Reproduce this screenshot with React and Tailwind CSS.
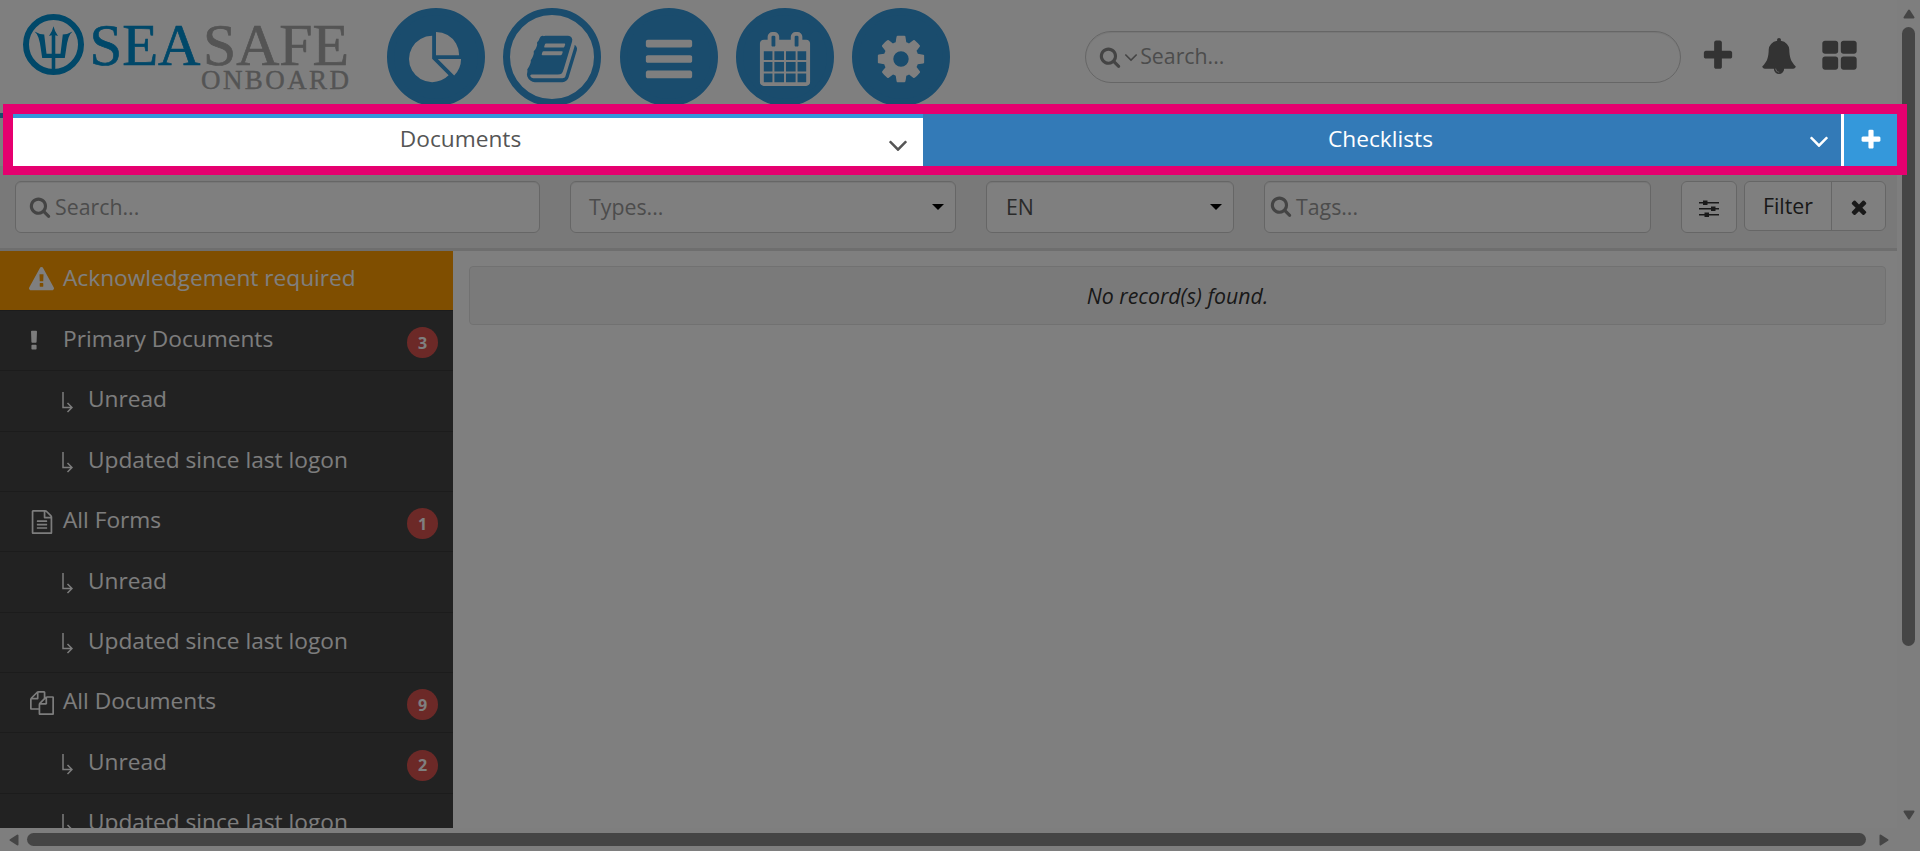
import React from 'react';

// Font Awesome 4 glyphs, 1792 unit grid
const icons = {
  search: 'M1216 832q0-185-131.5-316.5t-316.5-131.5-316.5 131.5-131.5 316.5 131.5 316.5 316.5 131.5 316.5-131.5 131.5-316.5zm512 832q0 52-38 90t-90 38q-54 0-90-38l-343-342q-179 124-399 124-143 0-273.5-55.5t-225-150-150-225-55.5-273.5 55.5-273.5 150-225 225-150 273.5-55.5 273.5 55.5 225 150 150 225 55.5 273.5q0 220-124 399l343 343q37 37 37 90z',
  plus: 'M1600 736v192q0 40-28 68t-68 28h-416v416q0 40-28 68t-68 28h-192q-40 0-68-28t-28-68v-416h-416q-40 0-68-28t-28-68v-192q0-40 28-68t68-28h416v-416q0-40 28-68t68-28h192q40 0 68 28t28 68v416h416q40 0 68 28t28 68z',
  bell: 'M912 1696q0-16-16-16-59 0-101.5-42.5t-42.5-101.5q0-16-16-16t-16 16q0 73 51.5 124.5t124.5 51.5q16 0 16-16zm816-288q0 52-38 90t-90 38h-448q0 106-75 181t-181 75-181-75-75-181h-448q-52 0-90-38t-38-90q50-42 91-88t85-119.5 74.5-158.5 50-206 19.5-260q0-152 117-282.5t307-158.5q-8-19-8-39 0-40 28-68t68-28 68 28 28 68q0 20-8 39 190 28 307 158.5t117 282.5q0 139 19.5 260t50 206 74.5 158.5 85 119.5 91 88z',
  thLarge: 'M832 1024v384q0 52-38 90t-90 38h-512q-52 0-90-38t-38-90v-384q0-52 38-90t90-38h512q52 0 90 38t38 90zm0-768v384q0 52-38 90t-90 38h-512q-52 0-90-38t-38-90v-384q0-52 38-90t90-38h512q52 0 90 38t38 90zm896 768v384q0 52-38 90t-90 38h-512q-52 0-90-38t-38-90v-384q0-52 38-90t90-38h512q52 0 90 38t38 90zm0-768v384q0 52-38 90t-90 38h-512q-52 0-90-38t-38-90v-384q0-52 38-90t90-38h512q52 0 90 38t38 90z',
  close: 'M1490 1322q0 40-28 68l-136 136q-28 28-68 28t-68-28l-294-294-294 294q-28 28-68 28t-68-28l-136-136q-28-28-28-68t28-68l294-294-294-294q-28-28-28-68t28-68l136-136q28-28 68-28t68 28l294 294 294-294q28-28 68-28t68 28l136 136q28 28 28 68t-28 68l-294 294 294 294q28 28 28 68z',
  angleDown: 'M1395 736q0 13-10 23l-466 466q-10 10-23 10t-23-10l-466-466q-10-10-10-23t10-23l50-50q10-10 23-10t23 10l393 393 393-393q10-10 23-10t23 10l50 50q10 10 10 23z',
  warning: 'M1024 1375v-190q0-14-9.5-23.5t-22.5-9.5h-192q-13 0-22.5 9.5t-9.5 23.5v190q0 14 9.5 23.5t22.5 9.5h192q13 0 22.5-9.5t9.5-23.5zm-2-374l18-459q0-12-10-19-13-11-24-11h-220q-11 0-24 11-10 7-10 21l17 457q0 10 10 16.5t24 6.5h185q14 0 23.5-6.5t10.5-16.5zm-14-934l768 1408q35 63-2 126-17 29-46.5 46t-63.5 17h-1536q-34 0-63.5-17t-46.5-46q-37-63-2-126l768-1408q17-31 47-49t65-18 65 18 47 49z',
  exclamation: 'M1088 1248v224q0 26-19 45t-45 19h-256q-26 0-45-19t-19-45v-224q0-26 19-45t45-19h256q26 0 45 19t19 45zm30-1056l-28 768q-1 26-20.5 45t-45.5 19h-256q-26 0-45.5-19t-20.5-45l-28-768q-1-26 17.5-45t44.5-19h320q26 0 44.5 19t17.5 45z',
  fileText: 'M1596 380q28 28 48 76t20 88v1152q0 40-28 68t-68 28h-1344q-40 0-68-28t-28-68v-1600q0-40 28-68t68-28h896q40 0 88 20t76 48zm-444-244v376h376q-10-29-22-41l-313-313q-12-12-41-22zm384 1528v-1024h-416q-40 0-68-28t-28-68v-416h-768v1536h1280zm-1024-864q0-14 9-23t23-9h704q14 0 23 9t9 23v64q0 14-9 23t-23 9h-704q-14 0-23-9t-9-23v-64zm736 224q14 0 23 9t9 23v64q0 14-9 23t-23 9h-704q-14 0-23-9t-9-23v-64q0-14 9-23t23-9h704zm0 256q14 0 23 9t9 23v64q0 14-9 23t-23 9h-704q-14 0-23-9t-9-23v-64q0-14 9-23t23-9h704z',
  files: 'M1696 384q40 0 68 28t28 68v1216q0 40-28 68t-68 28h-960q-40 0-68-28t-28-68v-288h-544q-40 0-68-28t-28-68v-672q0-40 20-88t48-76l408-408q28-28 76-48t88-20h416q40 0 68 28t28 68v328q68-40 128-40h416zm-544 213l-299 299h299v-299zm-640-384l-299 299h299v-299zm196 647l316-316v-416h-384v416q0 40-28 68t-68 28h-416v640h512v-256q0-40 20-88t48-76zm956 804v-1152h-384v416q0 40-28 68t-68 28h-416v640h896z',
  pie: 'M768 890l546 546q-106 108-247.5 168t-298.5 60q-209 0-385.5-103t-279.5-279.5-103-385.5 103-385.5 279.5-279.5 385.5-103v762zm187 6h773q0 157-60 298.5t-168 247.5zm709-128h-768v-768q209 0 385.5 103t279.5 279.5 103 385.5z',
  book: 'M1703 478q40 57 18 129l-275 906q-19 64-76.5 107.5t-122.5 43.5h-923q-77 0-148.5-53.5t-99.5-131.5q-24-67-2-127 0-4 3-27t4-37q1-8-3-21.5t-3-19.5q2-11 8-21t16.5-23.5 16.5-23.5q23-38 45-91.5t30-91.5q3-10 .5-30t-.5-28q3-11 17-28t17-23q21-36 42-92t25-90q1-9-2.5-32t.5-28q4-13 22-30.5t22-22.5q19-26 42.5-84.5t27.5-96.5q1-8-3-25.5t-2-26.5q2-8 9-18t18-23 17-21q8-12 16.5-30.5t15-35 16-36 19.5-32 26.5-23.5 36-11.5 47.5 5.5l-1 3q38-9 51-9h761q74 0 114 56t18 130l-274 906q-36 119-71.5 153.5t-128.5 34.5h-869q-27 0-38 15-11 16-1 43 24 70 144 70h923q29 0 56-15.5t35-41.5l300-987q7-22 5-57 38 15 59 43zm-1064 2q-4 13 2 22.5t20 9.5h608q13 0 25.5-9.5t16.5-22.5l21-64q4-13-2-22.5t-20-9.5h-608q-13 0-25.5 9.5t-16.5 22.5zm-83 256q-4 13 2 22.5t20 9.5h608q13 0 25.5-9.5t16.5-22.5l21-64q4-13-2-22.5t-20-9.5h-608q-13 0-25.5 9.5t-16.5 22.5z',
  bars: 'M1664 1344v128q0 26-19 45t-45 19h-1408q-26 0-45-19t-19-45v-128q0-26 19-45t45-19h1408q26 0 45 19t19 45zm0-512v128q0 26-19 45t-45 19h-1408q-26 0-45-19t-19-45v-128q0-26 19-45t45-19h1408q26 0 45 19t19 45zm0-512v128q0 26-19 45t-45 19h-1408q-26 0-45-19t-19-45v-128q0-26 19-45t45-19h1408q26 0 45 19t19 45z',
  calendar: 'M192 1664h288v-288h-288v288zm352 0h320v-288h-320v288zm-352-352h288v-320h-288v320zm352 0h320v-320h-320v320zm-352-384h288v-288h-288v288zm736 736h320v-288h-320v288zm-384-736h320v-288h-320v288zm768 736h288v-288h-288v288zm-384-352h320v-320h-320v320zm-352-864v-288q0-13-9.5-22.5t-22.5-9.5h-64q-13 0-22.5 9.5t-9.5 22.5v288q0 13 9.5 22.5t22.5 9.5h64q13 0 22.5-9.5t9.5-22.5zm736 864h288v-320h-288v320zm-384-384h320v-288h-320v288zm384 0h288v-288h-288v288zm32-480v-288q0-13-9.5-22.5t-22.5-9.5h-64q-13 0-22.5 9.5t-9.5 22.5v288q0 13 9.5 22.5t22.5 9.5h64q13 0 22.5-9.5t9.5-22.5zm384-64v1280q0 52-38 90t-90 38h-1408q-52 0-90-38t-38-90v-1280q0-52 38-90t90-38h128v-96q0-66 47-113t113-47h64q66 0 113 47t47 113v96h384v-96q0-66 47-113t113-47h64q66 0 113 47t47 113v96h128q52 0 90 38t38 90z',
  cog: 'M1152 896q0-106-75-181t-181-75-181 75-75 181 75 181 181 75 181-75 75-181zm512-109v222q0 12-8 23t-20 13l-185 28q-19 54-39 91 35 50 107 138 10 12 10 25t-9 23q-27 37-99 108t-94 71q-12 0-26-9l-138-108q-44 23-91 38-16 136-29 186-7 28-36 28h-222q-14 0-24.5-8.5t-11.5-21.5l-28-184q-49-16-90-37l-141 107q-10 9-25 9-14 0-25-11-126-114-165-168-7-10-7-23 0-12 8-23 15-21 51-66.5t54-70.5q-27-50-41-99l-183-27q-13-2-21-12.5t-8-23.5v-222q0-12 8-23t19-13l186-28q14-46 39-92-40-57-107-138-10-12-10-24 0-10 9-23 26-36 98.5-107.5t94.5-71.5q13 0 26 10l138 107q44-23 91-38 16-136 29-186 7-28 36-28h222q14 0 24.5 8.5t11.5 21.5l28 184q49 16 90 37l142-107q9-9 24-9 13 0 25 10 129 119 165 170 7 8 7 22 0 12-8 23-15 21-51 66.5t-54 70.5q26 50 41 98l183 28q13 2 21 12.5t8 23.5z',
};

function Icon({ name, className }) {
  return (
    <svg viewBox="0 0 1792 1792" fill="currentColor" className={`shrink-0 overflow-visible ${className}`}>
      <path d={icons[name]} />
    </svg>
  );
}

const navItems = ['pie', 'book', 'bars', 'calendar', 'cog'];

const menu = [
  { label: 'Primary Documents', icon: 'exclamation', badge: 3 },
  { label: 'Unread', sub: true },
  { label: 'Updated since last logon', sub: true },
  { label: 'All Forms', icon: 'fileText', badge: 1 },
  { label: 'Unread', sub: true },
  { label: 'Updated since last logon', sub: true },
  { label: 'All Documents', icon: 'files', badge: 9 },
  { label: 'Unread', sub: true, badge: 2 },
  { label: 'Updated since last logon', sub: true },
];

function Logo() {
  return (
    <svg width="350" height="90" viewBox="0 0 350 90" className="ml-[20px] mt-[10px] shrink-0 overflow-visible">
      <circle cx="33.500" cy="34.500" r="27.500" fill="none" stroke="#0090d2" strokeWidth="6" />
      {/* trident */}
      <g fill="#0090d2">
        <path d="M33.500 16.300q1.200 5.500 4.500 9.700l-2.700-.8v18.500h5.200l2.200-18.500 0-.6q5.500-.3 9.800-3-3 2.400-4 6.200-1.500 5-2 9l-1.700 11.200h-9.500V60h-3.600V48h-9.500l-1.700-11.200q-.5-4-2-9-1-3.800-4-6.200 4.300 2.700 9.800 3l0 .6 2.200 18.500h5.200V25.200l-2.700.8q3.300-4.200 4.500-9.700z" />
      </g>
      <g fontFamily="'Liberation Serif', serif" strokeWidth="0.7">
        <text x="69.500" y="54.500" fontSize="60" fill="#0090d2" stroke="#0090d2" textLength="111" lengthAdjust="spacingAndGlyphs">SEA</text>
        <text x="183" y="54.500" fontSize="60" fill="#a8a8a8" stroke="#a8a8a8" textLength="146" lengthAdjust="spacingAndGlyphs">SAFE</text>
        <text x="181" y="78.500" fontSize="27" fill="#a8a8a8" stroke="#a8a8a8" strokeWidth="0.4" textLength="148" lengthAdjust="spacing">ONBOARD</text>
      </g>
    </svg>
  );
}

function Header() {
  return (
    <header className="flex h-[113px] items-start">
      <div className="w-[387px]">
        <Logo />
      </div>
      <nav className="flex gap-[18.300px] pt-2">
        {navItems.map((name) => (
          <div
            key={name}
            className={`flex h-[98px] w-[98px] items-center justify-center rounded-full border-[7px] border-[#3498db] pt-[3px] ${
              name === 'book' ? 'bg-white text-[#3498db]' : 'bg-[#3498db] text-white'
            }`}
          >
            <Icon name={name} className="h-[54px] w-[54px]" />
          </div>
        ))}
      </nav>
      <div className="ml-[135px] mt-[31px] flex h-[52px] w-[596px] items-center rounded-full border border-[#ccc] pl-[13px] text-[#999] shadow-[inset_0_1px_1px_rgba(0,0,0,0.075)]">
        <Icon name="search" className="h-[22px] w-[22px] text-[#888]" />
        <Icon name="angleDown" className="-ml-px h-[22px] w-[22px] text-[#888]" />
        <span className="-ml-[2px] -mt-[2px] text-[21.300px]">Search...</span>
      </div>
      <div className="flex items-start pt-[38px] text-[#666]">
        <Icon name="plus" className="ml-[19px] h-[36px] w-[36px]" />
        <Icon name="bell" className="ml-[25px] h-[36px] w-[36px]" />
        <Icon name="thLarge" className="ml-[24px] h-[37px] w-[37px]" />
      </div>
    </header>
  );
}

function Tabs() {
  return (
    <div className="flex h-[53px] text-[22.700px]">
      <div className="relative flex w-[923px] items-center justify-center border-t-[5px] border-[#3498db] bg-white pr-[2px] text-[#555]">
        <span className="-mt-[6px]">Documents</span>
        <Icon name="angleDown" className="absolute right-[9px] top-[11px] h-[32px] w-[32px]" />
      </div>
      <div className="relative flex w-[918px] items-center justify-center bg-[#337ab7] pr-[3px] text-white">
        <span className="-mt-[1px]">Checklists</span>
        <Icon name="angleDown" className="absolute right-[6px] top-[12px] h-[32px] w-[32px]" />
      </div>
      <div className="ml-[3px] flex w-[53px] items-center justify-center bg-[#3498db] text-white">
        <Icon name="plus" className="h-[24px] w-[24px]" />
      </div>
    </div>
  );
}

function Caret() {
  return <span className="border-x-[6px] border-t-[6px] border-x-transparent border-t-black" />;
}

function FilterBar() {
  const field = 'flex h-[52px] items-center rounded-[6px] border border-[#ccc] bg-white shadow-[inset_0_1px_1px_rgba(0,0,0,0.075)]';
  return (
    <div className="flex h-[85px] items-start border-b-[3px] border-[#dcdcdc] bg-[#f3f3f3] pl-[15px] pt-[15px] text-[21.300px] text-[#999]">
      <div className={`${field} w-[525px] pl-[13px]`}>
        <Icon name="search" className="h-[22px] w-[22px] text-[#888]" />
        <span className="ml-[4px] -mt-px">Search...</span>
      </div>
      <div className={`${field} ml-[30px] w-[386px] justify-between pl-[18px] pr-[11px]`}>
        <span className="-mt-px">Types...</span>
        <Caret />
      </div>
      <div className={`${field} ml-[30px] w-[248px] justify-between pl-[19px] pr-[11px] text-[#555]`}>
        <span className="-mt-px">EN</span>
        <Caret />
      </div>
      <div className={`${field} ml-[30px] w-[387px] pl-[5px]`}>
        <Icon name="search" className="-mt-[2px] h-[22px] w-[22px] text-[#888]" />
        <span className="ml-[4px] -mt-px">Tags...</span>
      </div>
      <div className="ml-[30px] flex h-[52px] w-[56px] items-center justify-center rounded-[6px] border border-[#ccc] bg-white text-[#333]">
        <svg width="20" height="18" viewBox="0 0 20 18" fill="currentColor" className="mt-[3px]">
          <path d="M0 2h20v1.500H0zM0 8h20v1.500H0zM0 14h20v1.500H0z" />
          <path d="M4 .5h4.500V5H4zM12 6.500h4.500V11H12zM5.500 12.500H10V17H5.500z" />
        </svg>
      </div>
      <div className="ml-[7px] flex h-[50px] w-[142px] rounded-[6px] border border-[#ccc] bg-white text-[#333]">
        <div className="flex w-[87px] items-center justify-center border-r border-[#ccc]">Filter</div>
        <div className="flex flex-1 items-center justify-center">
          <Icon name="close" className="mt-[2px] h-[22px] w-[22px]" />
        </div>
      </div>
    </div>
  );
}

function Sidebar() {
  return (
    <aside className="w-[453px] shrink-0 overflow-hidden bg-[#444] text-[22.700px] text-white">
      <div className="flex h-[60px] items-center border-b border-[#383838] bg-[#ff9c00] pl-[29px]">
        <Icon name="warning" className="h-[25px] w-[25px] -translate-y-px" />
        <span className="ml-[9px] -mt-[4px]">Acknowledgement required</span>
      </div>
      {menu.map((item, i) => (
        <div key={i} className="flex h-[60.350px] items-center border-b border-[#383838] pr-[15px] text-[#fafafa]">
          {item.sub ? (
            <svg width="11" height="22" viewBox="0 0 11 22" fill="none" stroke="currentColor" strokeWidth="1.500" className="ml-[62px] mr-[15px] mt-[4px]">
              <path d="M1 0v15.500h8.500M5.500 11l4.500 4.500-4.500 4.500" />
            </svg>
          ) : (
            <div className="ml-[30px] flex w-[33px]">
              <Icon name={item.icon} className={item.icon === 'exclamation' ? '-ml-[8px] h-[24px] w-[24px]' : 'h-[24px] w-[24px]'} />
            </div>
          )}
          <span className="-mt-[3px] whitespace-nowrap">{item.label}</span>
          {item.badge && (
            <span className="ml-auto mt-[4px] flex h-[31px] w-[31px] items-center justify-center rounded-full bg-[#d9534f] text-[16px] font-bold text-white">
              {item.badge}
            </span>
          )}
        </div>
      ))}
    </aside>
  );
}

function Arrow({ className }) {
  return (
    <svg width="12" height="10" viewBox="0 0 12 10" className={className}>
      <path d="M6 1.500L10.500 8.500H1.500z" fill="#8b8b8b" stroke="#8b8b8b" strokeWidth="2" strokeLinejoin="round" />
    </svg>
  );
}

export default function App() {
  return (
    <div className="relative flex h-[851px] w-[1920px] flex-col overflow-hidden bg-white font-['Open_Sans','Noto_Sans',sans-serif]">
      <div className="flex h-[828px]">
        <div className="flex w-[1897px] flex-col">
          <Header />
          <Tabs />
          <FilterBar />
          <div className="flex min-h-0 flex-1">
            <Sidebar />
            <main className="flex-1 px-4 pt-[15px]">
              <div className="flex h-[59px] w-[1417px] items-center justify-center rounded-[4px] border border-[#e3e3e3] bg-[#f5f5f5] text-[21.300px] italic text-[#333]">
                No record(s) found.
              </div>
            </main>
          </div>
        </div>
        {/* vertical scrollbar */}
        <div className="flex w-[23px] flex-col items-center bg-[#fcfcfc] pt-[9px]">
          <Arrow />
          <div className="mt-2 h-[619px] w-[13px] rounded-full bg-[#8b8b8b]" />
          <Arrow className="mt-auto mb-[8px] rotate-180" />
        </div>
      </div>
      {/* horizontal scrollbar */}
      <div className="flex h-[23px] items-center bg-[#fcfcfc] pl-[8px]">
        <Arrow className="-rotate-90" />
        <div className="ml-[7px] h-[13px] w-[1839px] rounded-full bg-[#8b8b8b]" />
        <Arrow className="ml-[12px] rotate-90" />
      </div>

      {/* spotlight over the tab bar, dims the rest of the page */}
      <div className="absolute left-[3px] top-[104px] h-[71px] w-[1904px] border-[10px] border-b-[9px] border-[#e5006f] shadow-[0_0_0_2000px_rgba(0,0,0,0.5)]" />
    </div>
  );
}
